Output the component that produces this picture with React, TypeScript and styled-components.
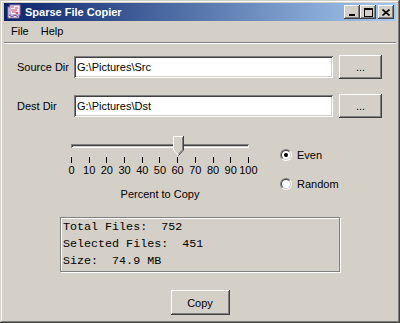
import { createGlobalStyle, css, styled } from 'styled-components';

const GlobalStyle = createGlobalStyle`
  html, body {
    margin: 0;
    padding: 0;
    background: #d4d0c8;
  }
  body {
    font-family: 'Liberation Sans', Arial, sans-serif;
    font-size: 11px;
    color: #000;
  }
`;

const raised = css`
  background: #d4d0c8;
  box-shadow:
    inset -1px -1px #404040,
    inset 1px 1px #ffffff,
    inset -2px -2px #808080,
    inset 2px 2px #d4d0c8;
`;

const Window = styled.div`
  width: 400px;
  height: 323px;
  box-sizing: border-box;
  padding: 3px 4px 4px;
  background: #d4d0c8;
  box-shadow:
    inset -1px -1px #404040,
    inset 1px 1px #d4d0c8,
    inset -2px -2px #808080,
    inset 2px 2px #ffffff;
  display: flex;
  flex-direction: column;
`;

const TitleBar = styled.div`
  height: 18px;
  display: flex;
  align-items: center;
  padding: 0 2px;
  background: linear-gradient(to right, #0a246a, #a6caf0);
`;

const TitleText = styled.span`
  flex: 1;
  margin-left: 3px;
  color: #fff;
  font-weight: bold;
  font-size: 11px;
`;

const CaptionButton = styled.button<{ $gapLeft?: number }>`
  ${raised};
  width: 16px;
  height: 14px;
  padding: 0;
  border: none;
  margin-left: ${p => p.$gapLeft ?? 0}px;
  display: flex;
  align-items: center;
  justify-content: center;
`;

const MenuBar = styled.div`
  height: 20px;
  display: flex;
  align-items: center;
  padding-left: 1px;
`;

const MenuItem = styled.span`
  padding: 0 6px;
  font-size: 11px;
`;

const Separator = styled.div`
  margin-top: 1px;
  height: 0;
  border-top: 1px solid #808080;
  border-bottom: 1px solid #ffffff;
`;

const Form = styled.div`
  display: flex;
  flex-direction: column;
  gap: 15px;
  padding: 11px 0 0 13px;
`;

const DirRow = styled.div`
  display: grid;
  grid-template-columns: 51px 259px 43px;
  column-gap: 6px;
  align-items: center;
  height: 24px;
`;

const Label = styled.span`
  font-size: 11px;
  white-space: nowrap;
`;

const Field = styled.div`
  height: 22px;
  box-sizing: border-box;
  padding: 0 3px;
  display: flex;
  align-items: center;
  background: #fff;
  font-size: 11px;
  box-shadow:
    inset 1px 1px #808080,
    inset -1px -1px #ffffff,
    inset 2px 2px #404040,
    inset -2px -2px #d4d0c8;
`;

const PushButton = styled.button<{ $w: number; $h: number }>`
  ${raised};
  width: ${p => p.$w}px;
  height: ${p => p.$h}px;
  border: none;
  padding: 0;
  font-family: 'Liberation Sans', Arial, sans-serif;
  font-size: 11px;
  color: #000;
`;

const Middle = styled.div`
  display: flex;
  align-items: flex-start;
  margin-top: 18px;
`;

const SliderBox = styled.div`
  width: 200px;
  box-sizing: border-box;
  padding: 0 11px;
  margin-left: 56px;
  display: flex;
  flex-direction: column;
`;

const ThumbRow = styled.div`
  position: relative;
  height: 20px;
`;

const Track = styled.div`
  margin-top: 8px;
  height: 4px;
  box-shadow:
    inset 1px 1px #808080,
    inset -1px -1px #ffffff,
    inset 2px 2px #404040,
    inset -2px -2px #d4d0c8;
`;

const Thumb = styled.svg`
  position: absolute;
  top: 0;
  margin-left: -5px;
`;

const Scale = styled.div`
  margin-top: 1px;
  display: flex;
  justify-content: space-between;
`;

const TickItem = styled.div`
  width: 1px;
  display: flex;
  flex-direction: column;
  align-items: center;
`;

const TickMark = styled.div`
  width: 1px;
  height: 6px;
  background: #000;
`;

const TickLabel = styled.span`
  margin-top: 1px;
  line-height: 13px;
  font-size: 11px;
  white-space: nowrap;
`;

const Caption = styled.div`
  margin-top: 11px;
  line-height: 13px;
  text-align: center;
  font-size: 11px;
`;

const RadioGroup = styled.div`
  margin-left: 20px;
  padding-top: 12px;
  display: flex;
  flex-direction: column;
  gap: 16px;
`;

const RadioRow = styled.label`
  display: flex;
  align-items: center;
  gap: 5px;
  height: 13px;
  font-size: 11px;
`;

const RadioOuter = styled.span`
  width: 12px;
  height: 12px;
  box-sizing: border-box;
  border-radius: 50%;
  border: 1px solid;
  border-color: #808080 #ffffff #ffffff #808080;
  display: flex;
`;

const RadioInner = styled.span<{ $on: boolean }>`
  flex: 1;
  border-radius: 50%;
  border: 1px solid;
  border-color: #404040 #d4d0c8 #d4d0c8 #404040;
  background: #fff;
  display: flex;
  align-items: center;
  justify-content: center;
  &::after {
    content: '';
    width: 4px;
    height: 4px;
    border-radius: 50%;
    background: ${p => (p.$on ? '#000' : 'transparent')};
  }
`;

const InfoBox = styled.div`
  margin: 16px 0 0 56px;
  width: 280px;
  height: 55px;
  box-sizing: border-box;
  padding: 1px 0 0 2px;
  border: 1px solid #808080;
  box-shadow: inset 1px 1px #ffffff, 1px 1px #ffffff;
  font-family: 'Liberation Mono', 'Courier New', monospace;
  font-size: 11.7px;
  line-height: 17px;
  white-space: pre;
`;

const Footer = styled.div`
  margin-top: 18px;
  display: flex;
  justify-content: center;
`;

function AppIcon() {
  return (
    <svg width="16" height="16" viewBox="0 0 16 16">
      <rect x="2" y="3" width="11" height="11" fill="#f4e8f0" stroke="#8a6aa0" />
      <rect x="4" y="1" width="10" height="10" fill="#fbeef6" stroke="#9a7ab0" />
      <path d="M5 3h3M9 4h3M5 6h6M6 8h4" stroke="#d0406a" strokeWidth="1.2" />
      <path d="M3 11l3 2 3-2 3 2" stroke="#7040a0" fill="none" />
      <circle cx="11" cy="9" r="1.3" fill="#e05080" />
    </svg>
  );
}

function Radio({ on, label }: { on: boolean; label: string }) {
  return (
    <RadioRow>
      <RadioOuter>
        <RadioInner $on={on} />
      </RadioOuter>
      {label}
    </RadioRow>
  );
}

const ticks = [0, 10, 20, 30, 40, 50, 60, 70, 80, 90, 100];

export default function App() {
  const percent = 60;
  return (
    <>
      <GlobalStyle />
      <Window>
        <TitleBar>
          <AppIcon />
          <TitleText>Sparse File Copier</TitleText>
          <CaptionButton>
            <svg width="8" height="8" viewBox="0 0 8 8">
              <rect x="1" y="6" width="6" height="2" fill="#000" />
            </svg>
          </CaptionButton>
          <CaptionButton>
            <svg width="9" height="9" viewBox="0 0 9 9">
              <rect x="0.5" y="0.5" width="8" height="8" fill="none" stroke="#000" />
              <rect x="0" y="0" width="9" height="2" fill="#000" />
            </svg>
          </CaptionButton>
          <CaptionButton $gapLeft={2}>
            <svg width="8" height="7" viewBox="0 0 8 7">
              <path d="M0.5 0.5l7 6M7.5 0.5l-7 6" stroke="#000" strokeWidth="1.6" />
            </svg>
          </CaptionButton>
        </TitleBar>

        <MenuBar>
          <MenuItem>File</MenuItem>
          <MenuItem>Help</MenuItem>
        </MenuBar>
        <Separator />

        <Form>
          <DirRow>
            <Label>Source Dir</Label>
            <Field>G:\Pictures\Src</Field>
            <PushButton $w={43} $h={24}>...</PushButton>
          </DirRow>
          <DirRow>
            <Label>Dest Dir</Label>
            <Field>G:\Pictures\Dst</Field>
            <PushButton $w={43} $h={24}>...</PushButton>
          </DirRow>
        </Form>

        <Middle>
          <SliderBox>
            <ThumbRow>
              <Track />
              <Thumb width="11" height="20" viewBox="0 0 11 20" style={{ left: `${percent}%` }}>
                <path d="M0 0H11V14L5.5 19.5L0 14Z" fill="#d4d0c8" />
                <path d="M0.5 14V0.5H10" stroke="#fff" fill="none" />
                <path d="M0.5 14L5.5 19" stroke="#fff" fill="none" />
                <path d="M10.5 0V14L5.5 19.5" stroke="#404040" fill="none" />
                <path d="M9.5 1V13.6L5.5 18" stroke="#808080" fill="none" />
              </Thumb>
            </ThumbRow>
            <Scale>
              {ticks.map(t => (
                <TickItem key={t}>
                  <TickMark />
                  <TickLabel>{t}</TickLabel>
                </TickItem>
              ))}
            </Scale>
            <Caption>Percent to Copy</Caption>
          </SliderBox>
          <RadioGroup>
            <Radio on label="Even" />
            <Radio on={false} label="Random" />
          </RadioGroup>
        </Middle>

        <InfoBox>
          {'Total Files:  752\nSelected Files:  451\nSize:  74.9 MB'}
        </InfoBox>

        <Footer>
          <PushButton $w={59} $h={25}>Copy</PushButton>
        </Footer>
      </Window>
    </>
  );
}
